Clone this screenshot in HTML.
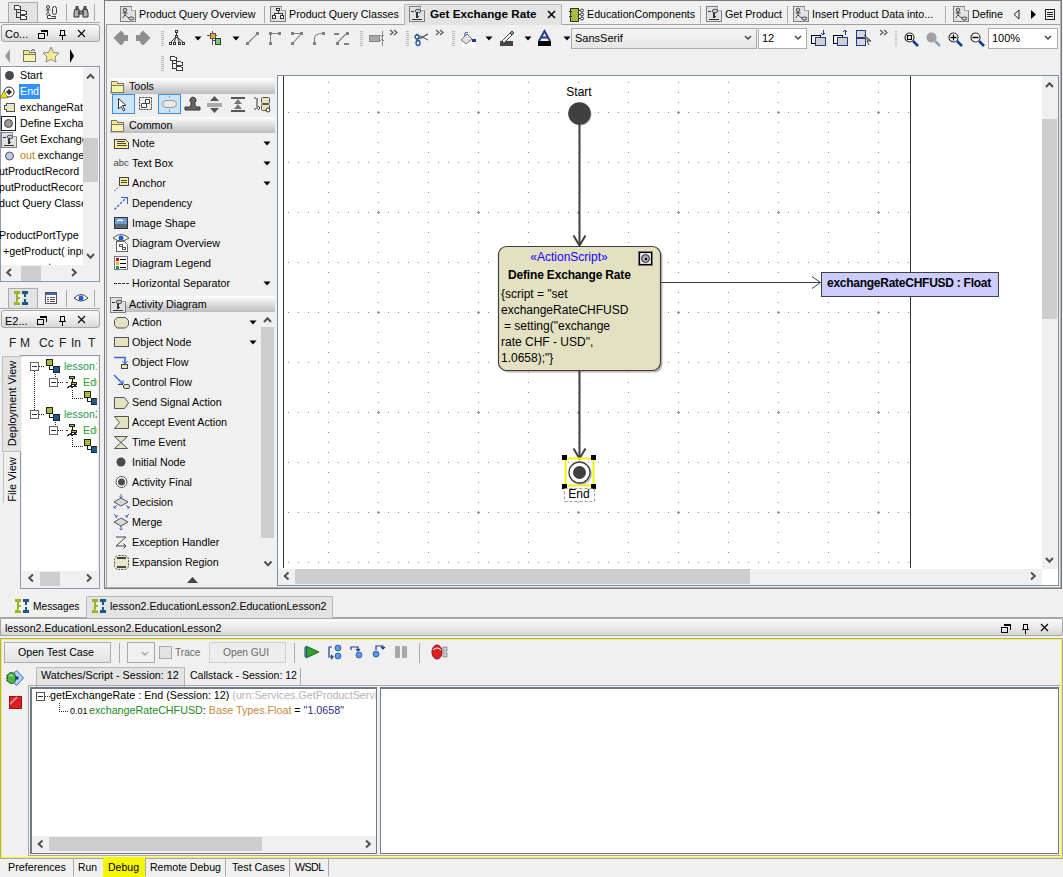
<!DOCTYPE html>
<html><head><meta charset="utf-8">
<style>
*{box-sizing:border-box;margin:0;padding:0}
html,body{width:1063px;height:877px;overflow:hidden;background:#F0F0F0;font-family:"Liberation Sans",sans-serif;font-size:10.7px;color:#000}
.a{position:absolute}
.t{position:absolute;white-space:nowrap;line-height:13px}
.hdr{position:absolute;background:linear-gradient(#FAFAFA,#E9E9E9 55%,#D7D7D7);border:1px solid #A5A5A5;border-radius:3px}
.pal{position:absolute;background:linear-gradient(#FFFFFF,#E8E8E8 35%,#BDBDBD);}
.sep{position:absolute;width:1px;background:#A9A9A9}
.grip{position:absolute;width:2px;background:repeating-linear-gradient(#B5B5B5 0 1px,transparent 1px 2px)}
svg{position:absolute;overflow:visible}
</style></head><body>

<!-- ============ LEFT TOP PANEL ============ -->
<div class="a" style="left:8px;top:2px;width:30px;height:21px;background:#E3E3E3;border:1px solid #ABABAB;border-bottom:none"></div>
<div class="a" style="left:0;top:22px;width:100px;height:1px;background:#A9A9A9"></div>
<div class="sep" style="left:66px;top:4px;height:17px"></div>
<div class="sep" style="left:94px;top:4px;height:17px"></div>
<div class="hdr" style="left:1px;top:24px;width:99px;height:18px"></div>
<div class="t" style="left:5px;top:28px;font-size:11px;color:#000">Co...</div>

<!-- tree list -->
<div class="a" style="left:0;top:66px;width:100px;height:216px;border:1px solid #8E9AA6;background:#F0F0F0"></div>
<div class="a" style="left:1px;top:67px;width:82px;height:198px;background:#fff"></div>
<div class="a" style="left:83px;top:138px;width:15px;height:44px;background:#CDCDCD"></div>
<div class="a" style="left:21px;top:266px;width:20px;height:15px;background:#CDCDCD"></div>

<div id="tree1" class="a" style="left:0;top:67px;width:83px;height:198px;overflow:hidden">
<div class="t" style="left:20px;top:2px">Start</div>
<div class="a" style="left:19px;top:17px;width:21px;height:15px;background:#3390FF"></div>
<div class="t" style="left:20px;top:18px;color:#fff">End</div>
<div class="t" style="left:20px;top:34px">exchangeRateCHFUSD</div>
<div class="t" style="left:20px;top:50px">Define Exchange Rate</div>
<div class="t" style="left:20px;top:66px">Get Exchange Rate</div>
<div class="t" style="left:20px;top:82px"><span style="color:#B8860B">out</span> exchangeRate</div>
<div class="t" style="left:-1px;top:98px">utProductRecord</div>
<div class="t" style="left:-1px;top:114px">putProductRecord</div>
<div class="t" style="left:-1px;top:130px">duct Query Classes</div>
<div class="t" style="left:-1px;top:162px">ProductPortType</div>
<div class="t" style="left:3px;top:178px">+getProduct( input</div>
<div class="t" style="left:12px;top:194px">parameters</div>
</div>

<!-- ============ LEFT BOTTOM PANEL ============ -->
<div class="a" style="left:8px;top:288px;width:30px;height:21px;background:#E3E3E3;border:1px solid #ABABAB;border-bottom:none"></div>
<div class="a" style="left:0;top:308px;width:100px;height:1px;background:#A9A9A9"></div>
<div class="sep" style="left:66px;top:290px;height:17px"></div>
<div class="sep" style="left:94px;top:290px;height:17px"></div>
<div class="hdr" style="left:1px;top:310px;width:99px;height:18px"></div>
<div class="t" style="left:5px;top:315px;font-size:11px">E2...</div>
<div class="a" style="left:0;top:335px;width:98px;height:16px;overflow:hidden;font-size:12px;color:#202020">
<span class="t" style="left:9px;top:2px">F</span><span class="t" style="left:20px;top:2px">M</span><span class="t" style="left:39px;top:2px">Cc</span><span class="t" style="left:59px;top:2px">F</span><span class="t" style="left:71px;top:2px">In</span><span class="t" style="left:88px;top:2px">T</span></div>

<div class="a" style="left:20px;top:355px;width:80px;height:234px;border:1px solid #8E9AA6;background:#F0F0F0"></div>
<div class="a" style="left:22px;top:357px;width:75px;height:214px;background:#fff"></div>
<div class="a" style="left:40px;top:572px;width:20px;height:14px;background:#CDCDCD"></div>

<!-- vertical tabs -->
<div class="a" style="left:2px;top:356px;width:19px;height:96px;background:#E3E3E3;border:1px solid #BFBFBF;border-right:none"></div>
<div class="t" style="left:-36.5px;top:397px;width:96px;transform:rotate(-90deg);font-size:11px;text-align:center">Deployment View</div>
<div class="a" style="left:3px;top:453px;width:1px;height:50px;background:#BFBFBF"></div>
<div class="t" style="left:-14.5px;top:472.5px;width:52px;transform:rotate(-90deg);font-size:11px;text-align:center">File View</div>

<!-- ============ MAIN PANEL ============ -->
<div class="a" style="left:104px;top:0;width:958px;height:589px;border:1px solid #7A7A7A;box-shadow:inset -1px -1px 0 #B0B0B0"></div>
<div class="a" style="left:106px;top:24px;width:954px;height:563px;border:1px solid #A0A0A0;border-right:none;border-bottom:none"></div>
<div class="a" style="left:404px;top:4px;width:158px;height:21px;background:#E3E3E3;border:1px solid #B8B8B8;border-bottom:none;border-radius:2px 2px 0 0"></div>

<div id="tabs" class="a" style="left:0;top:0">
<div class="t" style="left:139px;top:8px">Product Query Overview</div>
<div class="sep" style="left:264px;top:6px;height:17px"></div>
<div class="t" style="left:289px;top:8px">Product Query Classes</div>
<div class="t" style="left:430px;top:7px;font-weight:bold;font-size:11.7px">Get Exchange Rate</div>
<div class="t" style="left:587px;top:8px">EducationComponents</div>
<div class="sep" style="left:700px;top:6px;height:17px"></div>
<div class="t" style="left:725px;top:8px">Get Product</div>
<div class="sep" style="left:787px;top:6px;height:17px"></div>
<div class="t" style="left:812px;top:8px">Insert Product Data into...</div>
<div class="sep" style="left:945px;top:6px;height:17px"></div>
<div class="t" style="left:972px;top:8px">Define</div>
</div>

<!-- toolbar -->
<div class="grip" style="left:162px;top:31px;height:15px"></div>
<div class="grip" style="left:162px;top:56px;height:15px"></div>
<div class="grip" style="left:361px;top:31px;height:15px"></div>
<div class="grip" style="left:407px;top:31px;height:15px"></div>
<div class="grip" style="left:453px;top:31px;height:15px"></div>
<div class="grip" style="left:895px;top:31px;height:15px"></div>

<div class="a" style="left:571px;top:28px;width:186px;height:21px;background:linear-gradient(#F5F5F5,#E6E6E6);border:1px solid #ACACAC"></div>
<div class="t" style="left:575px;top:32px;font-size:11px">SansSerif</div>
<div class="a" style="left:758px;top:28px;width:49px;height:21px;background:#fff;border:1px solid #ACACAC"></div>
<div class="t" style="left:762px;top:32px;font-size:11px">12</div>
<div class="a" style="left:988px;top:28px;width:70px;height:21px;background:#fff;border:1px solid #ACACAC"></div>
<div class="t" style="left:992px;top:32px;font-size:11px">100%</div>

<!-- ============ PALETTE ============ -->
<div id="palette" class="a" style="left:0;top:0">
<div class="pal" style="left:110px;top:78px;width:165px;height:16px"></div>
<div class="t" style="left:129px;top:80px;font-size:10.7px">Tools</div>
<div class="a" style="left:112px;top:94px;width:23px;height:20px;background:#CCE4F7;border:1px solid #3D8EE0"></div>
<div class="a" style="left:158px;top:94px;width:23px;height:20px;background:#CCE4F7;border:1px solid #3D8EE0"></div>
<div class="pal" style="left:110px;top:117px;width:165px;height:16px"></div>
<div class="t" style="left:129px;top:119px;font-size:10.7px">Common</div>
<div class="t" style="left:132px;top:137px">Note</div>
<div class="t" style="left:132px;top:157px">Text Box</div>
<div class="t" style="left:132px;top:177px">Anchor</div>
<div class="t" style="left:132px;top:197px">Dependency</div>
<div class="t" style="left:132px;top:217px">Image Shape</div>
<div class="t" style="left:132px;top:237px">Diagram Overview</div>
<div class="t" style="left:132px;top:257px">Diagram Legend</div>
<div class="t" style="left:132px;top:277px">Horizontal Separator</div>
<div class="pal" style="left:110px;top:296px;width:165px;height:16px"></div>
<div class="t" style="left:129px;top:298px;font-size:10.76px">Activity Diagram</div>
<div class="t" style="left:132px;top:316px">Action</div>
<div class="t" style="left:132px;top:336px">Object Node</div>
<div class="t" style="left:132px;top:356px">Object Flow</div>
<div class="t" style="left:132px;top:376px">Control Flow</div>
<div class="t" style="left:132px;top:396px">Send Signal Action</div>
<div class="t" style="left:132px;top:416px">Accept Event Action</div>
<div class="t" style="left:132px;top:436px">Time Event</div>
<div class="t" style="left:132px;top:456px">Initial Node</div>
<div class="t" style="left:132px;top:476px">Activity Final</div>
<div class="t" style="left:132px;top:496px">Decision</div>
<div class="t" style="left:132px;top:516px">Merge</div>
<div class="t" style="left:132px;top:536px">Exception Handler</div>
<div class="t" style="left:132px;top:556px">Expansion Region</div>
<div class="a" style="left:261px;top:327px;width:13px;height:211px;background:#CDCDCD"></div>
</div>

<!-- ============ CANVAS ============ -->
<div class="a" style="left:277px;top:75px;width:782px;height:511px;border:1px solid #7F8C99;background:#F0F0F0"></div>
<div class="a" style="left:278px;top:76px;width:764px;height:493px;background:#fff"></div>
<div class="a" style="left:1042px;top:569px;width:16px;height:16px;background:#fff"></div>
<div class="a" style="left:295px;top:569px;width:455px;height:15px;background:#CDCDCD"></div>
<div class="a" style="left:1042px;top:119px;width:15px;height:200px;background:#CDCDCD"></div>
<div class="a" style="left:278px;top:76px;width:763px;height:492px;overflow:hidden">
<svg width="763" height="492" viewBox="278 76 763 492" style="left:0;top:0">
<defs>
<pattern id="ph" x="288" y="112" width="10" height="50" patternUnits="userSpaceOnUse"><rect width="1" height="1" fill="#8C8C8C"/></pattern>
<pattern id="pp" x="377" y="111" width="100" height="100" patternUnits="userSpaceOnUse"><path d="M0 1h3v1h-3zM1 0h1v3h-1z" fill="#8C8C8C"/></pattern>
<pattern id="pv" x="328" y="82" width="50" height="10" patternUnits="userSpaceOnUse"><rect width="1" height="1" fill="#8C8C8C"/></pattern>
</defs>
<rect x="284" y="76" width="626" height="492" fill="url(#ph)"/>
<rect x="284" y="76" width="626" height="492" fill="url(#pv)"/>
<rect x="284" y="76" width="626" height="492" fill="url(#pp)"/>
<g fill="#8C8C8C">

</g>
<rect x="283" y="76" width="1" height="492" fill="#333"/>
<rect x="910" y="76" width="1" height="492" fill="#333"/>
<!-- start -->
<text x="579" y="96" font-size="12" text-anchor="middle" font-family="Liberation Sans" fill="#000">Start</text>
<circle cx="580.5" cy="114.5" r="11" fill="#BDBDBD"/>
<circle cx="579.5" cy="113.5" r="11.3" fill="#404040"/>
<path d="M579.5 124V245" stroke="#404040" stroke-width="2" fill="none"/>
<path d="M573.5 235.5L579.5 245.5L585.5 235.5" stroke="#404040" stroke-width="2" fill="none"/>
<!-- action -->
<rect x="500.5" y="248.5" width="162" height="124" rx="8" fill="#B8B8B8"/>
<rect x="498.5" y="246.5" width="162" height="124" rx="8" fill="#E3E1C2" stroke="#404040" stroke-width="1.2"/>
<rect x="638.5" y="251.5" width="14" height="14" fill="#fff" stroke="#888" stroke-width="1"/>
<rect x="639.5" y="252.5" width="12" height="12" fill="#fff" stroke="#000" stroke-width="1.3"/>
<circle cx="645.5" cy="258.5" r="4" fill="#A8A8A8" stroke="#222" stroke-width="1"/>
<rect x="645" y="258" width="2" height="2" fill="#000"/>
<text x="569" y="261" font-size="12" text-anchor="middle" font-family="Liberation Sans" fill="#1400FF">«ActionScript»</text>
<text x="508" y="279" font-size="12" font-weight="bold" letter-spacing="-0.17" font-family="Liberation Sans" fill="#000">Define Exchange Rate</text>
<g font-size="12" font-family="Liberation Sans" fill="#000">
<text x="501" y="298">{script = "set</text>
<text x="501" y="314">exchangeRateCHFUSD</text>
<text x="504" y="330">= setting("exchange</text>
<text x="501" y="346">rate CHF - USD",</text>
<text x="501" y="362">1.0658);"}</text>
</g>
<path d="M579.5 371V458" stroke="#404040" stroke-width="2" fill="none"/>
<path d="M573.5 448.5L579.5 458.5L585.5 448.5" stroke="#404040" stroke-width="2" fill="none"/>
<!-- object -->
<path d="M661 282.5H820" stroke="#404040" stroke-width="1" fill="none"/>
<path d="M812 276.5L820.5 282.5L812 288.5" stroke="#404040" stroke-width="1" fill="none"/>
<rect x="821.5" y="272.5" width="177" height="24" fill="#CCCCFF" stroke="#404040" stroke-width="1"/>
<text x="827" y="287" font-size="12" font-weight="bold" letter-spacing="-0.26" font-family="Liberation Sans" fill="#000">exchangeRateCHFUSD : Float</text>
<!-- end -->
<rect x="565.5" y="458.5" width="28" height="27" fill="none" stroke="#F5F500" stroke-width="2"/>
<circle cx="581" cy="474" r="11" fill="#C8C8C8"/>
<circle cx="579.5" cy="472.5" r="10.5" fill="#fff" stroke="#404040" stroke-width="1.3"/>
<circle cx="579.5" cy="472.5" r="6.5" fill="#404040"/>
<rect x="562" y="455" width="5" height="5" fill="#000"/>
<rect x="591" y="455" width="5" height="5" fill="#000"/>
<rect x="562" y="484" width="5" height="5" fill="#000"/>
<rect x="591" y="484" width="5" height="5" fill="#000"/>
<rect x="564.5" y="488.5" width="30" height="13" fill="none" stroke="#9A9A9A" stroke-width="1" stroke-dasharray="3 2"/>
<text x="579" y="498" font-size="12" text-anchor="middle" font-family="Liberation Sans" fill="#000">End</text>
</svg>
</div>

<!-- ============ BOTTOM ============ -->
<div class="a" style="left:0;top:617px;width:1063px;height:1px;background:#A9A9A9"></div>
<div class="a" style="left:86px;top:596px;width:247px;height:22px;background:#E3E3E3;border:1px solid #B8B8B8;border-bottom:none;border-radius:2px 2px 0 0"></div>
<div class="t" style="left:33px;top:600px;font-size:10.2px">Messages</div>
<div class="t" style="left:110px;top:600px;font-size:10.58px">lesson2.EducationLesson2.EducationLesson2</div>
<div class="hdr" style="left:0;top:618px;width:1063px;height:18px;border-radius:0 2px 2px 0"></div>
<div class="t" style="left:5px;top:622px;font-size:10.58px">lesson2.EducationLesson2.EducationLesson2</div>

<div class="a" style="left:0;top:638px;width:1063px;height:221px;border:1px solid #A6A6B8;background:#F0F0F0"></div>
<div class="a" style="left:1px;top:639px;width:1061px;height:219px;border:1px solid #FFFF00"></div>

<div class="a" style="left:4px;top:642px;width:107px;height:21px;background:linear-gradient(#F4F4F4,#E4E4E4);border:1px solid #ADADAD"></div>
<div class="t" style="left:18px;top:646px;font-size:10.63px">Open Test Case</div>
<div class="sep" style="left:119px;top:643px;height:20px"></div>
<div class="a" style="left:127px;top:642px;width:28px;height:21px;background:#F0F0F0;border:1px solid #A9A9A9"></div>
<div class="a" style="left:159px;top:646px;width:13px;height:13px;background:#E4E4E4;border:1px solid #A9A9A9"></div>
<div class="t" style="left:175px;top:646px;font-size:10.12px;color:#6A6A6A">Trace</div>
<div class="a" style="left:209px;top:642px;width:77px;height:21px;background:#EDEDED;border:1px solid #D0D0D0"></div>
<div class="t" style="left:223px;top:646px;font-size:10.22px;color:#6A6A6A">Open GUI</div>
<div class="sep" style="left:294px;top:643px;height:20px"></div>
<div class="sep" style="left:419px;top:643px;height:20px"></div>

<div class="a" style="left:36px;top:667px;width:149px;height:20px;background:#E3E3E3;border:1px solid #B8B8B8;border-bottom:none"></div>
<div class="t" style="left:41px;top:669px;font-size:10.78px">Watches/Script - Session: 12</div>
<div class="t" style="left:190px;top:669px;font-size:10.52px">Callstack - Session: 12</div>
<div class="sep" style="left:300px;top:668px;height:18px"></div>

<div class="a" style="left:28px;top:685px;width:1032px;height:1px;background:#A8A8A8"></div>
<div class="a" style="left:28px;top:685px;width:1px;height:171px;background:#A8A8A8"></div>
<div class="a" style="left:28px;top:855px;width:1032px;height:1px;background:#A8A8A8"></div>
<div class="a" style="left:30px;top:687px;width:347px;height:167px;border:1px solid #6E7A86;border-top:2px solid #6E7A86;border-left:2px solid #6E7A86;background:#F0F0F0"></div>
<div class="a" style="left:32px;top:689px;width:344px;height:147px;background:#fff"></div>
<div class="a" style="left:49px;top:837px;width:213px;height:14px;background:#CDCDCD"></div>
<div class="a" style="left:380px;top:687px;width:679px;height:167px;border:1px solid #6E7A86;border-top:2px solid #6E7A86;background:#fff"></div>

<div class="a" style="left:31px;top:688px;width:345px;height:148px;overflow:hidden">
<div class="t" style="left:19px;top:1px;font-size:10.73px">getExchangeRate : End (Session: 12) <span style="color:#B4B4B4">(urn:Services.GetProductService)</span></div>
<div class="t" style="left:39px;top:17px;font-size:9px">0.01</div>
<div class="t" style="left:58px;top:16px;font-size:10.73px"><span style="color:#228B22">exchangeRateCHFUSD</span>: <span style="color:#C8883C">Base Types.Float</span> = <span style="color:#2B2B8F">"1.0658"</span></div>
</div>

<!-- bottom tabs -->
<div class="a" style="left:103px;top:857px;width:42px;height:20px;background:#F6F600"></div>
<div class="t" style="left:8px;top:861px;font-size:10.76px">Preferences</div>
<div class="sep" style="left:73px;top:859px;height:17px"></div>
<div class="t" style="left:78px;top:861px;font-size:10.36px">Run</div>
<div class="t" style="left:108px;top:861px;font-size:10.52px">Debug</div>
<div class="sep" style="left:145px;top:859px;height:17px"></div>
<div class="t" style="left:150px;top:861px;font-size:10.56px">Remote Debug</div>
<div class="sep" style="left:225px;top:859px;height:17px"></div>
<div class="t" style="left:232px;top:861px;font-size:10.71px">Test Cases</div>
<div class="sep" style="left:289px;top:859px;height:17px"></div>
<div class="t" style="left:295px;top:861px;font-size:10.7px;letter-spacing:-0.55px">WSDL</div>
<div class="sep" style="left:328px;top:859px;height:17px"></div>


<!-- ============ ICON OVERLAY ============ -->
<svg width="1063" height="877" style="left:0;top:0;pointer-events:none" shape-rendering="crispEdges">
<defs>
<g id="doc"><path d="M0.5 0.5H11.5L15.5 4.5V15.5H0.5Z" fill="#E2E2E2" stroke="#808080"/><path d="M11.5 0.5V4.5H15.5" fill="#fff" stroke="#A0A0A0"/></g>
<g id="actdoc"><use href="#doc"/><g shape-rendering="auto"><circle cx="5" cy="4" r="1.8" fill="#B8C8E8" stroke="#333" stroke-width="0.8"/><path d="M5 6V9M2.5 7H7.5M5 9L2.5 12M5 9L7.5 11L10 12.5" stroke="#333" stroke-width="0.9" fill="none"/><ellipse cx="11.5" cy="12.5" rx="2.5" ry="1.6" fill="#B8C8E8" stroke="#333" stroke-width="0.8"/></g></g>
<g id="classdoc"><use href="#doc"/><path d="M6.5 2.5h3v2h-3zM2.5 9.5h3v3h-3zM10.5 9.5h3v3h-3zM8 4.5V7M4 9.5V7H12V9.5" fill="#fff" stroke="#333"/></g>
<g id="actvdoc"><use href="#doc"/><path d="M2 5.5H5M8 5.5V12M3 13.5H13" stroke="#333" stroke-width="1.2" fill="none"/><ellipse cx="9" cy="5" rx="2.8" ry="1.8" fill="#B8C8E8" stroke="#333" stroke-width="0.8" shape-rendering="auto"/><path d="M6.5 10.5H9.5" stroke="#333"/></g>
<g id="tree"><path d="M0.5 0.5h4l1 1h1v3h-6z M2.5 4.5v8M2.5 7.5h4M2.5 12.5h4 M6.5 5.5h4l1 1h1v3h-6z M6.5 10.5h4l1 1h1v3h-6z" fill="#fff" stroke="#3C3C3C" stroke-width="1"/></g>
<g id="ddn"><path d="M-0.5 -0.5h7l-3.5 4z" fill="#000" shape-rendering="auto"/></g>
<g id="grp"><path d="M0 0h2v1h-2zM0 2h2v1h-2zM0 4h2v1h-2zM0 6h2v1h-2zM0 8h2v1h-2zM0 10h2v1h-2zM0 12h2v1h-2zM0 14h2v1h-2z" fill="#BDBDBD"/></g>
<g id="restore"><path d="M0.5 3.5h6v5h-6z" fill="none" stroke="#000" stroke-width="1.3"/><path d="M3 1h6.5v5" fill="none" stroke="#000" stroke-width="1.3"/></g>
<g id="pin"><path d="M1.5 0.5h4v5h-4zM0 5.5h7M3.5 6v4" fill="none" stroke="#000" stroke-width="1.3"/></g>
<g id="xcl"><path d="M0 0L7 7M7 0L0 7" stroke="#000" stroke-width="1.1" shape-rendering="auto"/></g>
<g id="chev"><path d="M0 0L3 3L6 0" fill="none" stroke="#444" stroke-width="1.5" shape-rendering="auto"/></g>
<g id="dbl"><path d="M0 0L3 2.5L0 5M4 0L7 2.5L4 5" fill="none" stroke="#555" stroke-width="1.2" shape-rendering="auto"/></g>
<g id="folder"><path d="M0.5 1.5h5l1 1.5h5.5v9h-11.5z" fill="#F2E98A" stroke="#777"/><path d="M0.5 5.5h12v7h-12z" fill="#FBF3A8" stroke="#777"/></g>
<g id="e2"><path d="M0 0h6v3h-2v3h2v2h-2v3h2v3h-6v-3h2v-8h-2z" fill="#9AB526"/><path d="M8 0h6v3h-2.5v8h2.5v3h-6v-3h2v-3h1.5v-2h-1.5v-3h-2z" fill="#1B5A82"/><path d="M4.2 5.2Q6.5 3.5 7.8 5.5Q7.5 7.5 4.5 10.5H8" stroke="#fff" stroke-width="1.3" fill="none" shape-rendering="auto"/></g>
<g id="cu"><path d="M-3.5 2L0 -1.8L3.5 2" fill="none" stroke="#505050" stroke-width="2" shape-rendering="auto"/></g>
<g id="cd"><path d="M-3.5 -2L0 1.8L3.5 -2" fill="none" stroke="#505050" stroke-width="2" shape-rendering="auto"/></g>
<g id="cl"><path d="M2 -3.5L-1.8 0L2 3.5" fill="none" stroke="#505050" stroke-width="2" shape-rendering="auto"/></g>
<g id="cr"><path d="M-2 -3.5L1.8 0L-2 3.5" fill="none" stroke="#505050" stroke-width="2" shape-rendering="auto"/></g>
<g id="mag"><circle cx="5.5" cy="5.5" r="4.5" fill="#fff" stroke="#333" stroke-width="1.2"/><path d="M9 9L14 14" stroke="#0F3C8C" stroke-width="2.5"/></g>
</defs>

<!-- left top tabs -->
<use href="#tree" x="14" y="5" transform=""/>
<g transform="translate(45 5)" fill="none" stroke="#3C3C3C" shape-rendering="auto"><circle cx="3" cy="2" r="1.5"/><path d="M3 3.5V7M0.5 5H5.5M3 7L1 10M3 7L5 10" stroke-width="0.9"/><rect x="7.5" y="1.5" width="4" height="8" rx="2"/><path d="M2.5 10.5h3l1 1h4v2h-8z" fill="#fff"/></g>
<g transform="translate(74 6)" shape-rendering="auto"><path d="M1 3h4v8h-5v-4z M9 3h4l1 4v4h-5z" fill="#B0B0B0" stroke="#333"/><path d="M2 0.5h2v3h-2zM10 0.5h2v3h-2zM5 5h4v3h-4z" fill="#909090" stroke="#333"/></g>
<use href="#restore" x="38" y="30"/>
<use href="#pin" x="59" y="30"/>
<use href="#xcl" x="78" y="30"/>
<path d="M10 49V63L5 56Z" fill="#9A9A9A" shape-rendering="auto"/>
<g transform="translate(23 49)"><use href="#folder"/><path d="M8 2Q10 -1 12 2" stroke="#333" fill="none" shape-rendering="auto"/></g>
<path d="M51 47L53.5 52.5L59 53L55 57L56 62L51 59.5L46 62L47 57L43 53L48.5 52.5Z" fill="#F4EC8C" stroke="#888" shape-rendering="auto"/>
<path d="M70 49V63L74 56Z" fill="#000" shape-rendering="auto"/>
<!-- left tree icons -->
<circle cx="9.5" cy="75.5" r="4.5" fill="#4A4A4A" shape-rendering="auto"/>
<g shape-rendering="auto"><circle cx="9" cy="92" r="5" fill="#fff" stroke="#333"/><path d="M9 89L12 92L9 95L6 92Z" fill="#333"/><path d="M4 91L8 98H0Z" fill="#F0E000" stroke="#555" stroke-width="0.6"/></g>
<path d="M4.5 105.5h2v-2h8v8h-8v-2h-2z" fill="#E8E8C8" stroke="#555" />
<rect x="1.5" y="116.5" width="14" height="14" fill="#fff" stroke="#222" stroke-width="1.5"/><circle cx="8.5" cy="123.5" r="4" fill="#999" stroke="#444" shape-rendering="auto"/>
<g transform="translate(1 132)"><use href="#actvdoc"/></g>
<circle cx="9.5" cy="156" r="4" fill="#B8CCEE" stroke="#555" shape-rendering="auto"/>

<!-- main tabs icons -->
<use href="#actdoc" x="120" y="6"/>
<use href="#classdoc" x="270" y="6"/>
<use href="#actvdoc" x="409" y="6"/>
<g transform="translate(548 11)"><path d="M0 0L7 7M7 0L0 7" stroke="#000" stroke-width="1.5" shape-rendering="auto"/></g>
<g transform="translate(569 6)"><path d="M1.5 2.5h8v13h-8z" fill="#A8BC3C" stroke="#333"/><path d="M0 5.5h3M0 10.5h3M9 4.5h4M9 8.5h4M9 12.5h4" stroke="#333"/><circle cx="13" cy="4.5" r="1.5" fill="#fff" stroke="#333" shape-rendering="auto"/><circle cx="13" cy="8.5" r="1.5" fill="#fff" stroke="#333" shape-rendering="auto"/><circle cx="13" cy="12.5" r="1.5" fill="#fff" stroke="#333" shape-rendering="auto"/></g>
<use href="#actvdoc" x="706" y="6"/>
<use href="#actdoc" x="793" y="6"/>
<use href="#actdoc" x="953" y="6"/>
<path d="M1019 10V19L1014 14.5Z" fill="none" stroke="#222" shape-rendering="auto"/>
<path d="M1031 10V19L1036 14.5Z" fill="#000" shape-rendering="auto"/>
<path d="M1045.5 9.5h9v10h-9z" fill="none" stroke="#222"/><path d="M1047 12h6M1047 14h6M1047 16h6" stroke="#222"/>

<!-- toolbar -->
<path d="M113.5 38L121 30.5L124.5 34L123 35H128V41H123L124.5 42L121 45.5Z" fill="#8E8E8E" shape-rendering="auto"/>
<path d="M150.5 38L143 30.5L139.5 34L141 35H136V41H141L139.5 42L143 45.5Z" fill="#8E8E8E" shape-rendering="auto"/>
<use href="#grp" x="161" y="31"/>
<use href="#grp" x="161" y="56"/>
<use href="#tree" x="170" y="56"/>
<g transform="translate(169 30)" fill="#fff" stroke="#333"><path d="M6.5 0.5h2v2h-2zM6.5 5.5h2v2h-2zM0.5 12.5h2v2h-2zM4.5 12.5h2v2h-2zM9.5 12.5h2v2h-2zM13.5 12.5h2v2h-2z"/><path d="M7.5 2.5V5.5M6.5 7.5L1.5 12.5M6.5 7.5L5.5 12.5M8.5 7.5L10.5 12.5M8.5 7.5L14.5 12.5" fill="none" shape-rendering="auto"/></g>
<use href="#ddn" x="195" y="37"/>
<g transform="translate(207 31)"><path d="M5 0V14M0 4H10M5 9H13" stroke="#555"/><rect x="3" y="2" width="5" height="5" fill="#F0A030" stroke="#555"/><rect x="8.5" y="7.5" width="5" height="6" fill="#70D070" stroke="#333"/></g>
<use href="#ddn" x="233" y="37"/>
<g fill="#808080" stroke="#808080"><path d="M248 43L257 34" stroke-width="1.2" shape-rendering="auto"/><rect x="246" y="42" width="3" height="3" stroke="none"/><rect x="256" y="32" width="3" height="3" stroke="none"/>
<path d="M270.5 34V43M270 33.5H280" stroke-width="1"/><rect x="269" y="32" width="3" height="3" stroke="none"/><rect x="278" y="32" width="3" height="3" stroke="none"/><rect x="269" y="42" width="3" height="3" stroke="none"/>
<path d="M292 33.5H301M301 34L293 43" stroke-width="1.1" shape-rendering="auto"/><rect x="291" y="32" width="3" height="3" stroke="none"/><rect x="300" y="32" width="3" height="3" stroke="none"/><rect x="291" y="42" width="3" height="3" stroke="none"/>
<path d="M314.5 43V39Q314.5 33.5 322 33.5" fill="none" stroke-width="1.1" shape-rendering="auto"/><rect x="313" y="42" width="3" height="3" stroke="none"/><rect x="322" y="32" width="3" height="3" stroke="none"/>
<path d="M337 43L347 33" stroke-width="1.1" shape-rendering="auto"/><rect x="334" y="33" width="5" height="2" stroke="none"/><rect x="346" y="32" width="3" height="3" stroke="none"/><rect x="336" y="42" width="3" height="3" stroke="none"/><rect x="344" y="43" width="5" height="2" stroke="none"/></g>
<use href="#grp" x="360" y="31"/>
<rect x="369" y="35" width="10" height="6" fill="#A8A8A8" stroke="#888"/><path d="M382 31V46M380 35L382 37L384 35M380 41L382 39L384 41" stroke="#888" fill="none"/>
<use href="#dbl" x="390" y="30"/>
<use href="#grp" x="406" y="31"/>
<g transform="translate(414 31)" shape-rendering="auto"><path d="M2 3L14 9M2 9L14 3" stroke="#555" stroke-width="1"/><circle cx="3" cy="6" r="2" fill="none" stroke="#1E50A0" stroke-width="1.3"/><ellipse cx="4" cy="12" rx="2" ry="2.5" fill="none" stroke="#1E50A0" stroke-width="1.3"/><path d="M6 8L14 3" stroke="#555"/></g>
<use href="#dbl" x="436" y="30"/>
<use href="#grp" x="452" y="31"/>
<g transform="translate(460 31)" shape-rendering="auto"><rect x="2" y="11" width="13" height="5" fill="#fff"/><path d="M1 9L7 3L12 8L6 13Z" fill="#E0E0E0" stroke="#777"/><path d="M5 5Q4 0 8 2" stroke="#1E50A0" fill="none"/><rect x="12" y="8" width="4" height="3" fill="#1E3C8C"/></g>
<use href="#ddn" x="486" y="37"/>
<g transform="translate(500 31)" shape-rendering="auto"><rect x="0" y="10" width="13" height="5" fill="#444"/><path d="M2 10L10 2L12 4L4 12Z" fill="#E8E8E8" stroke="#555"/><path d="M10 2L12 0L14 2L12 4Z" fill="#6A9AE0" stroke="#345"/></g>
<use href="#ddn" x="525" y="37"/>
<g transform="translate(538 31)" shape-rendering="auto"><rect x="0" y="10" width="13" height="5" fill="#000"/><path d="M1 10L6.5 0L12 10M3 6.5H10" stroke="#1E3C8C" stroke-width="2" fill="none"/></g>
<use href="#ddn" x="564" y="37"/>
<use href="#chev" x="745" y="36"/>
<use href="#chev" x="795" y="36"/>
<use href="#chev" x="1045" y="36"/>
<g transform="translate(811 30)"><path d="M0.5 5.5h9v8h-9z" fill="none" stroke="#000"/><path d="M4.5 7.5h10v8h-10z" fill="#D0D0D0" stroke="#1E3C8C"/><path d="M12 0V5M10 3L12 5L14 3" stroke="#1E3C8C" fill="none"/></g>
<g transform="translate(833 30)"><path d="M0.5 5.5h9v8h-9z" fill="none" stroke="#000"/><path d="M4.5 7.5h10v8h-10z" fill="#D0D0D0" stroke="#1E3C8C"/><path d="M12 5V0M10 2L12 0L14 2" stroke="#1E3C8C" fill="none"/></g>
<g transform="translate(856 30)"><path d="M0.5 0.5h9v7h-9zM0.5 8.5h9v7h-9z" fill="#D8D8D8" stroke="#1E3C8C"/><path d="M8 5L15 11L11 11L13 15" fill="#999" stroke="#444" shape-rendering="auto"/></g>
<use href="#dbl" x="880" y="30"/>
<use href="#grp" x="895" y="31"/>
<g shape-rendering="auto"><use href="#mag" x="904" y="32"/><rect x="907.5" y="35.5" width="4" height="4" fill="none" stroke="#000" stroke-width="1.2"/>
<g opacity="0.45"><use href="#mag" x="926" y="32"/></g><circle cx="931.5" cy="37.5" r="4.5" fill="#A0A0A0"/>
<use href="#mag" x="948" y="32"/><path d="M953.5 34.5V40.5M950.5 37.5H956.5" stroke="#000" stroke-width="1.3"/>
<use href="#mag" x="970" y="32"/><path d="M972.5 37.5H978.5" stroke="#000" stroke-width="1.5"/></g>

<!-- palette icons -->
<g id="palicons">
<use href="#folder" x="111" y="80"/>
<use href="#folder" x="111" y="119"/>
<g transform="translate(110 297)"><use href="#actvdoc"/></g>
<g shape-rendering="auto">
<path d="M118.5 98.5V109L121 106.5L123.5 111L125 110L122.5 105.5H126Z" fill="#fff" stroke="#333"/>
<g fill="none" stroke="#444" stroke-dasharray="2 1"><rect x="139.5" y="97.5" width="12" height="12"/></g><path d="M141.5 103.5h5v4h-5zM145.5 99.5h4v4h-4z" fill="#fff" stroke="#444"/>
<rect x="162.5" y="100.5" width="14" height="7" rx="3.5" fill="#E8E8E8" stroke="#999"/><path d="M169.5 96V98M169.5 109V112" stroke="#999"/>
<path d="M185 110h15v-3h-4l-1-2v-2.5a3 3 0 1 0 -4 0V105l-1 2h-5z" fill="#666" stroke="#333"/>
<path d="M207 104h15M207 106h15" stroke="#666" stroke-width="1.2"/><path d="M214.5 96L210 101H219Z M214.5 113L210 108H219Z" fill="#555"/>
<path d="M231 97h14v2h-14zM231 110h14v2h-14z" fill="#555"/><path d="M238 99L234 104H242Z M238 104L234 109H242Z" fill="#777"/>
<path d="M257 98V109M256 98h-2M256 109h-2M258 106L260 108L258 110" stroke="#333" fill="none"/><rect x="261.5" y="97.5" width="8" height="6" rx="1" fill="#E8E4B8" stroke="#555"/><rect x="261.5" y="104.5" width="8" height="6" rx="1" fill="#E8E4B8" stroke="#555"/><circle cx="268" cy="110" r="2" fill="#fff" stroke="#333"/>
</g>
<!-- common -->
<path d="M114.5 139.5h11l3 3v5.5h-14z" fill="#F6EE9A" stroke="#444"/><path d="M116.5 141.5h8M116.5 143.5h9M116.5 145.5h10" stroke="#444"/>
<text x="113.5" y="166" font-size="9.5" fill="#444" font-family="Liberation Sans">abc</text>
<rect x="119.5" y="177.5" width="9" height="8" fill="#F6EE9A" stroke="#444"/><path d="M121 180.5h6M121 182.5h6" stroke="#444"/><path d="M114.5 191L119 186.5" stroke="#444" stroke-dasharray="1.5 1.5" shape-rendering="auto"/>
<path d="M114.5 209.5L126.5 197.5" stroke="#3C64D0" stroke-width="1.3" stroke-dasharray="2.5 1.5" shape-rendering="auto"/><path d="M121 197.5H127.5V204" stroke="#3C64D0" stroke-width="1.5" fill="none"/>
<rect x="114.5" y="217.5" width="13" height="11" fill="#6E9BD0" stroke="#333"/><rect x="115" y="224" width="12" height="4" fill="#5A6A7A"/><path d="M117 221Q120 219 123 221" stroke="#fff" stroke-width="1.5" fill="none" shape-rendering="auto"/>
<path d="M116.5 241.5h8l3 3v7h-11z" fill="#fff" stroke="#666"/><path d="M119.5 244.5h3v2h-3zM122.5 247.5h3v2h-3z" fill="none" stroke="#555"/>
<path d="M113 238Q121 231 129 238Q121 244 113 238Z" fill="#fff" stroke="#555" shape-rendering="auto"/><circle cx="121" cy="238" r="2.5" fill="#1E5AE0" shape-rendering="auto"/>
<rect x="114.5" y="256.5" width="13" height="13" fill="#fff" stroke="#777"/><rect x="116" y="258" width="3" height="3" fill="#D01010"/><rect x="116" y="262" width="3" height="3" fill="#F4B000"/><rect x="116" y="266" width="3" height="3" fill="#109080"/><path d="M120 259.5h6M120 263.5h6M120 267.5h6" stroke="#000"/>
<path d="M114 283.5h15" stroke="#333" stroke-dasharray="2.5 1.5"/>
<!-- activity -->
<g shape-rendering="auto">
<path d="M117 317.5H125.5L128.5 320.5V325L125.5 328H117L114.5 325V320.5Z" fill="#E4E2C0" stroke="#555"/>
<rect x="114.5" y="337.5" width="14" height="9" fill="#E4E2C0" stroke="#555"/>
<path d="M114 357.5H125V363" stroke="#3C64D0" stroke-width="1.5" fill="none"/><path d="M122.5 361L125 364L127.5 361" stroke="#3C64D0" fill="none"/><rect x="121.5" y="364.5" width="6" height="4" fill="#E4E2C0" stroke="#444"/>
<path d="M114 375L123 384" stroke="#3C64D0" stroke-width="1.5"/><path d="M123 380V384H119" stroke="#3C64D0" fill="none"/><path d="M118 384.5H123" stroke="#444"/><rect x="123.5" y="384.5" width="6" height="4" rx="1.5" fill="#E4E2C0" stroke="#444"/>
<path d="M114.5 397.5H124.5L128.5 403L124.5 408.5H114.5Z" fill="#E4E2C0" stroke="#555"/>
<path d="M114.5 416.5H128.5V428.5H114.5L119.5 422.5Z" fill="#E4E2C0" stroke="#555"/>
<path d="M114.5 436.5H127.5L121 442.5L127.5 448.5H114.5L121 442.5Z" fill="#E4E2C0" stroke="#555"/>
<circle cx="121" cy="462" r="4.5" fill="#4A4A4A"/>
<circle cx="121.5" cy="482" r="5.5" fill="#fff" stroke="#555"/><circle cx="121.5" cy="482" r="3.5" fill="#4A4A4A"/>
<path d="M114 502L121 498L128 502L121 506Z" fill="#D8D8D8" stroke="#555"/><path d="M121 494V498M119.5 496.5L121 498L122.5 496.5M117 505L114 508M126 505L129 508M114 506V508H116M129 506V508H127" stroke="#3C64D0" fill="none"/>
<path d="M114 522L121 518L128 522L121 526Z" fill="#D8D8D8" stroke="#555"/><path d="M121 526V530M119.5 528.5L121 530L122.5 528.5M114 514L117 517M129 514L126 517M115 517H117V515M128 517H126V515" stroke="#3C64D0" fill="none"/>
<path d="M116 537H126L116 546H126M123.5 543.5L126 546L123.5 548.5" stroke="#444" fill="none"/>
<rect x="114.5" y="555.5" width="14" height="14" rx="4" fill="#E8E6C8" stroke="#555" stroke-dasharray="2 1.2"/><path d="M117 557h9v2h-9zM117 566h9v2h-9z" fill="#444"/>
</g>
<use href="#ddn" x="264" y="142"/><use href="#ddn" x="264" y="162"/><use href="#ddn" x="264" y="182"/><use href="#ddn" x="264" y="282"/>
<use href="#ddn" x="250" y="321"/><use href="#ddn" x="250" y="341"/>
<path d="M187 583L192.5 577L198 583Z" fill="#444" shape-rendering="auto"/>
</g>

<!-- left-bottom panel icons -->
<use href="#e2" x="14" y="291"/>
<g transform="translate(45 292)"><rect x="0.5" y="0.5" width="11" height="11" fill="#fff" stroke="#555"/><rect x="1" y="1" width="10" height="2" fill="#3C64D0"/><path d="M2 5h2M5 5h5M2 7h2M5 7h5M2 9h2M5 9h5" stroke="#555"/></g>
<g transform="translate(74 293)" shape-rendering="auto"><path d="M0 5Q7 -2 14 5Q7 11 0 5Z" fill="#fff" stroke="#444"/><circle cx="7" cy="5" r="2.5" fill="#1E5AE0"/></g>
<use href="#restore" x="37" y="316"/>
<use href="#pin" x="59" y="316"/>
<use href="#xcl" x="78" y="316"/>
<clipPath id="lclip"><rect x="22" y="357" width="75" height="214"/></clipPath>
<g id="ltree" clip-path="url(#lclip)">
<g stroke="#222" stroke-dasharray="1 1" fill="none"><path d="M39 366.5H45M34.5 371V410M58 382.5H64M55.5 374V378M72.5 390V398.5H83M39 414.5H45M55.5 422V426M58 430.5H64M72.5 438V446.5H83"/></g>
<g fill="#fff" stroke="#666"><rect x="30.5" y="362.5" width="8" height="8"/><rect x="49.5" y="378.5" width="8" height="8"/><rect x="30.5" y="410.5" width="8" height="8"/><rect x="49.5" y="426.5" width="8" height="8"/></g>
<path d="M32 366.5h5M51 382.5h5M32 414.5h5M51 430.5h5" stroke="#333"/>
<g id="comp"><rect x="46.5" y="359.5" width="6" height="6" fill="#A8BC3C" stroke="#222"/><rect x="53.5" y="366.5" width="6" height="6" fill="#1E5A8C" stroke="#222"/><path d="M49.5 366V369.5H53" stroke="#222" fill="none"/></g>
<use href="#comp" x="38" y="32"/>
<use href="#comp" x="0" y="48"/>
<use href="#comp" x="38" y="80"/>
<g id="pkg"><path d="M69.5 376.5h5v2h-5zM71.5 382.5h5v2h-5zM66 382.5H68M72 378.5V382M68 386h9" fill="#A8BC3C" stroke="#222"/><path d="M67 388L74 384M71 388L76 385" stroke="#222"/></g>
<use href="#pkg" x="0" y="48"/>
<text x="64" y="370" font-size="10.7" fill="#259A50" font-family="Liberation Sans">lesson1</text>
<text x="83" y="386" font-size="10.7" fill="#22A022" font-family="Liberation Sans">EducationComponents</text>
<text x="64" y="418" font-size="10.7" fill="#259A50" font-family="Liberation Sans">lesson2</text>
<text x="83" y="434" font-size="10.7" fill="#22A022" font-family="Liberation Sans">EducationComponents</text>
</g>

<!-- canvas scroll arrows -->

<!-- bottom icons -->
<use href="#e2" x="15" y="599"/>
<use href="#e2" x="92" y="599"/>
<use href="#restore" x="1001" y="624"/>
<use href="#pin" x="1022" y="624"/>
<use href="#xcl" x="1041" y="624"/>
<g transform="translate(142 652)"><path d="M0 0L3 3L6 0" fill="none" stroke="#A8A8A8" stroke-width="1.5" shape-rendering="auto"/></g>
<g shape-rendering="auto">
<path d="M306 646L319 652L306 658Z" fill="#30A030" stroke="#1E6E1E"/><path d="M304 648h3M304 650h3M304 652h3M304 654h3M304 656h3" stroke="#1E3C8C"/>
<path d="M332 647H329V657H332M331 655L333 657L331 659" stroke="#1E3C8C" fill="none" stroke-width="1.2"/><circle cx="338" cy="648" r="3" fill="#5A9AE0" stroke="#1E3C8C" stroke-width="0.7"/><circle cx="338" cy="656" r="3" fill="#5A9AE0" stroke="#1E3C8C" stroke-width="0.7"/>
<path d="M351 650V647H358V651M356 649L358 651L360 649" stroke="#1E3C8C" fill="none" stroke-width="1.2"/><circle cx="359" cy="655" r="3" fill="#5A9AE0" stroke="#1E3C8C" stroke-width="0.7"/>
<circle cx="376" cy="654" r="3" fill="#5A9AE0" stroke="#1E3C8C" stroke-width="0.7"/><path d="M376 650V646H383V649M381 647L383 649L385 647" stroke="#1E3C8C" fill="none" stroke-width="1.2"/>
<rect x="395" y="646" width="5" height="12" fill="#A8A8A8"/><rect x="402" y="646" width="5" height="12" fill="#A8A8A8"/>
<ellipse cx="437" cy="652" rx="5" ry="7" fill="#E02020" stroke="#901010"/><path d="M433 650Q437 646 441 650" stroke="#fff" fill="none"/><rect x="443" y="647" width="4" height="4" fill="#C8D0E0" stroke="#777" stroke-width="0.7"/><rect x="443" y="653" width="4" height="4" fill="#C8D0E0" stroke="#777" stroke-width="0.7"/>
<path d="M16.5 670.5L23.5 678L16.5 685.5L10 678Z" fill="#B8D4F4" stroke="#3C64D0"/><path d="M6 675L9 676M6 678H9M6 681L9 680M14 674L12 676M14 682L12 680" stroke="#234" stroke-width="0.8"/><ellipse cx="11.5" cy="678" rx="4.5" ry="5.5" fill="#4CB84C" stroke="#1E5A1E"/><path d="M9 676Q11 674 13 676" stroke="#B8F0B8" fill="none"/><circle cx="17" cy="678" r="1.8" fill="#1E3C8C"/>
</g>
<rect x="9" y="696" width="12" height="12" fill="#D82020" stroke="#A01010"/><path d="M10 704L17 697" stroke="#F08080" stroke-width="2" shape-rendering="auto"/>
<rect x="36.5" y="692.5" width="8" height="8" fill="#fff" stroke="#555"/><path d="M38 696.5h5" stroke="#333"/>
<path d="M45 696.5H50M59.5 703V711.5H69" stroke="#333" stroke-dasharray="1 1" fill="none"/>

<use href="#cu" x="90.5" y="76.5"/><use href="#cd" x="90.5" y="256"/><use href="#cl" x="9" y="272.5"/><use href="#cr" x="74" y="272.5"/>
<use href="#cu" x="267.5" y="320"/><use href="#cd" x="268" y="563.5"/>
<use href="#cl" x="31" y="578"/><use href="#cr" x="89" y="578"/>
<use href="#cu" x="1049.5" y="85"/><use href="#cd" x="1049.5" y="560"/><use href="#cl" x="286.5" y="576"/><use href="#cr" x="1033" y="576"/>
<use href="#cl" x="40.5" y="844"/><use href="#cr" x="368" y="844"/>
</svg>

</body></html>
